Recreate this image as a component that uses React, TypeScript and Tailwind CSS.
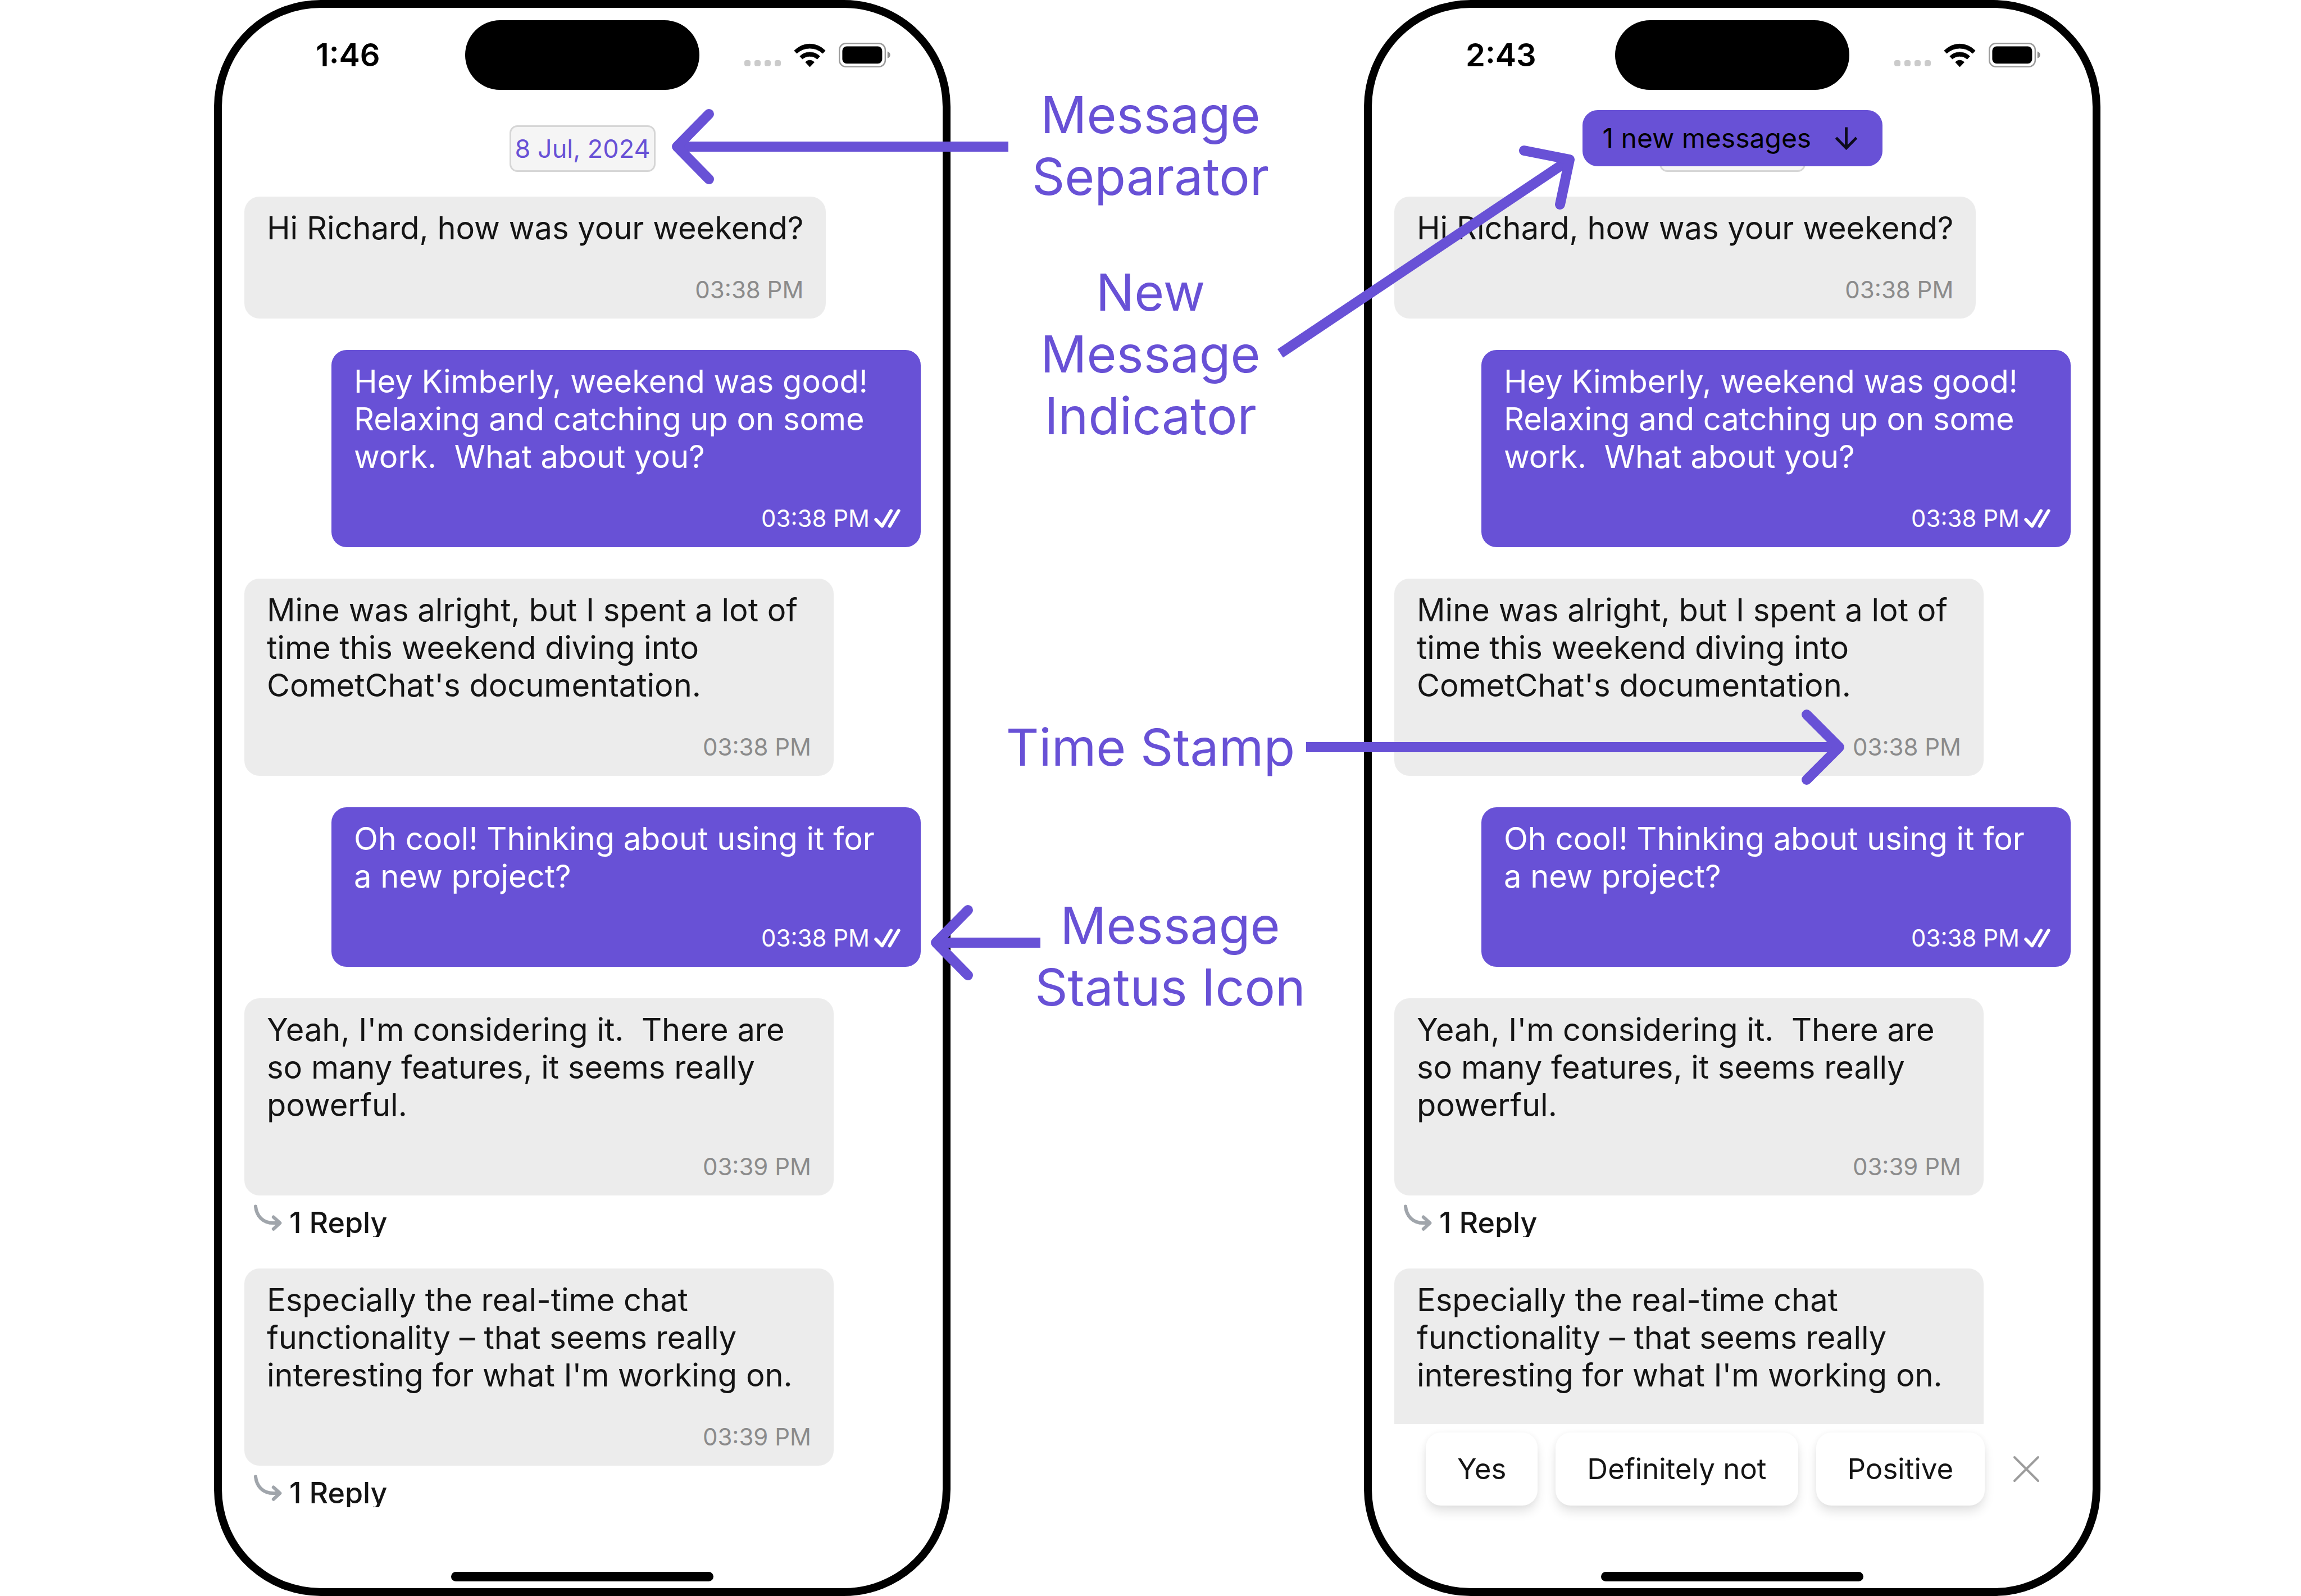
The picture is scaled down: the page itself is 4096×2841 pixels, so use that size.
import { ReactNode } from "react";

type Message = {
  id: number;
  own?: boolean;
  lines: string[];
  time: string;
  replies?: string;
};

const MESSAGES: Message[] = [
  { id: 1, lines: ["Hi Richard, how was your weekend?"], time: "03:38 PM" },
  {
    id: 2,
    own: true,
    lines: ["Hey Kimberly, weekend was good!", "Relaxing and catching up on some", "work.  What about you?"],
    time: "03:38 PM",
  },
  {
    id: 3,
    lines: ["Mine was alright, but I spent a lot of", "time this weekend diving into", "CometChat's documentation."],
    time: "03:38 PM",
  },
  { id: 4, own: true, lines: ["Oh cool! Thinking about using it for", "a new project?"], time: "03:38 PM" },
  {
    id: 5,
    lines: ["Yeah, I'm considering it.  There are", "so many features, it seems really", "powerful."],
    time: "03:39 PM",
    replies: "1 Reply",
  },
  {
    id: 6,
    lines: ["Especially the real-time chat", "functionality – that seems really", "interesting for what I'm working on."],
    time: "03:39 PM",
    replies: "1 Reply",
  },
];

function WifiIcon() {
  return (
    <svg viewBox="29 36 188 141" className="h-[43px] w-[57px]" stroke="black" strokeWidth="3" strokeLinejoin="round" aria-hidden="true">
      <path d="M32 79Q72 40 123 40T214 79L199 95Q166 65 123 65T47 95z" />
      <path d="M65 112Q90 88 123 88T182 112L167 128Q148 112 123 112T80 128z" />
      <path d="M98 147Q109 135 123 135T149 147L123 174z" />
    </svg>
  );
}

function BatteryIcon() {
  return (
    <svg viewBox="297 36 302 144" className="h-[44px] w-[92px]" aria-hidden="true">
      <rect x="301" y="40" width="268" height="136" rx="38" fill="none" stroke="#9b9b9b" strokeWidth="8" />
      <rect x="318" y="57" width="233" height="101" rx="26" />
      <path d="M582 87Q598 93 598 107T582 127z" fill="#8f8f8f" />
    </svg>
  );
}

function DoubleCheckIcon() {
  return (
    <svg viewBox="54 71 156 113" className="h-[34px] w-[47px]" fill="none" stroke="white" strokeWidth="20" strokeLinecap="round" strokeLinejoin="round" aria-hidden="true">
      <path d="M65 134L101 172L154 82M146 172L199 82" />
    </svg>
  );
}

function ReplyIcon() {
  return (
    <svg viewBox="47 42 168 155" className="h-[47px] w-[51px]" fill="none" stroke="#a0a5ab" strokeWidth="20" strokeLinecap="round" strokeLinejoin="round" aria-hidden="true">
      <path d="M60 54C66 112 104 151 165 151H202M165 116L203 151L165 186" />
    </svg>
  );
}

function StatusBar({ time }: { time: string }) {
  return (
    <header className="mt-[22px] grid grid-cols-[1fr_auto_1fr] items-center">
      <p className="pl-[167px] text-[56px] leading-[66px] font-semibold">{time}</p>
      <div className="h-[124px] w-[417px] rounded-full bg-black" />
      <div className="flex items-end justify-end gap-[23px] pr-[93px]">
        <div className="flex gap-[7px] pb-[2px]">
          {[0, 1, 2, 3].map((n) => (
            <span key={n} className="size-[11px] rounded-[4px] bg-[#cbcbcb]" />
          ))}
        </div>
        <WifiIcon />
        <BatteryIcon />
      </div>
    </header>
  );
}

function Bubble({ message }: { message: Message }) {
  const { own, lines, time, replies } = message;
  return (
    <li className={own ? "mb-[56px] flex flex-col items-end" : "mb-[56px] flex flex-col items-start"}>
      <div
        className={
          own
            ? "w-[1049px] rounded-[27px] bg-[#6851d6] pt-[23px] pr-[36px] pb-[28px] pl-[40px] text-white"
            : lines.length === 1
              ? "rounded-[27px] bg-[#ececec] pt-[23px] pr-[40px] pb-[28px] pl-[40px] text-[#141414]"
              : "w-[1049px] rounded-[27px] bg-[#ececec] pt-[23px] pr-[40px] pb-[28px] pl-[40px] text-[#141414]"
        }
      >
        <p className="text-[56px] leading-[67px] whitespace-pre">{lines.join("\n")}</p>
        <div className="mt-[52px] flex items-center justify-end gap-[8px]">
          <time className={own ? "text-[42px] leading-[47px]" : "text-[42px] leading-[47px] text-[#8b8b8b]"}>{time}</time>
          {own && <DoubleCheckIcon />}
        </div>
      </div>
      {replies && (
        <button type="button" className="flex h-[74px] gap-[13px] overflow-hidden pl-[16px] text-[#141414]">
          <span className="pt-[16px]">
            <ReplyIcon />
          </span>
          <span className="pt-[25px] text-[52px] leading-[48px] font-medium">{replies}</span>
        </button>
      )}
    </li>
  );
}

function Phone({ time, banner, children }: { time: string; banner?: ReactNode; children?: ReactNode }) {
  return (
    <section className="relative flex h-screen flex-col overflow-hidden rounded-[190px] border-[14px] border-black bg-white">
      <StatusBar time={time} />
      {banner}
      <div className="min-h-0 flex-1 overflow-hidden pt-[63px] pr-[39px] pl-[40px]">
        <p className="mx-auto mb-[44px] h-[83px] w-[260px] rounded-[14px] border-[3px] border-[#d6d6d6] bg-[#f5f5f5] text-center text-[45px] leading-[77px] whitespace-nowrap text-[#6851d6]">
          8 Jul, 2024
        </p>
        <ul>
          {MESSAGES.map((m) => (
            <Bubble key={m.id} message={m} />
          ))}
        </ul>
      </div>
      {children}
      <div className="mx-auto mb-[12px] h-[17px] w-[467px] shrink-0 rounded-full bg-black" />
    </section>
  );
}

function NewMessages() {
  return (
    <button
      type="button"
      className="absolute top-[182px] left-1/2 flex h-[100px] w-[534px] -translate-x-1/2 items-center justify-between rounded-[27px] bg-[#6851d6] pr-[44px] pl-[36px] text-[48px] whitespace-nowrap text-black"
    >
      1 new messages
      <svg viewBox="50 52 134 136" className="size-[41px]" fill="none" stroke="#0d0a1c" strokeWidth="16" aria-hidden="true">
        <path d="M117 54V178M57 116L117 177L177 116" />
      </svg>
    </button>
  );
}

function SmartReplies() {
  return (
    <div className="flex shrink-0 items-center gap-[32px] pt-[15px] pb-[118px] pl-[96px]">
      {["Yes", "Definitely not", "Positive"].map((text) => (
        <button
          key={text}
          type="button"
          className="h-[130px] rounded-[27px] bg-white px-[56px] text-[51px] whitespace-nowrap text-[#141414] shadow-[0_12px_20px_-2px_rgba(0,0,0,0.12),0_0_12px_rgba(0,0,0,0.04)]"
        >
          {text}
        </button>
      ))}
      <button type="button" aria-label="Close" className="ml-[18px]">
        <svg viewBox="0 0 48 48" className="size-[48px]" fill="none" stroke="#9c9c9c" strokeWidth="4" strokeLinecap="round" aria-hidden="true">
          <path d="M3 3l42 42M45 3L3 45" />
        </svg>
      </button>
    </div>
  );
}

function Arrows() {
  return (
    <svg
      viewBox="0 0 4096 2841"
      className="pointer-events-none absolute inset-0 h-full w-full"
      fill="none"
      stroke="#6851d6"
      strokeWidth="18"
      strokeLinejoin="round"
      aria-hidden="true"
    >
      <path d="M1795 261H1208M2279 629L2790 287M2325 1330H3270M1852 1678H1670" />
      <g strokeLinecap="round">
        <path d="M1262 203L1205 261L1262 319" />
        <path d="M2713 268L2794 284L2777 364" />
        <path d="M3216 1272L3274 1330L3216 1388" />
        <path d="M1723 1620L1666 1678L1723 1736" />
      </g>
    </svg>
  );
}

export default function App() {
  return (
    <main
      className="relative grid h-screen grid-cols-[381fr_1311fr_736fr_1311fr_357fr] overflow-hidden bg-white text-black"
      style={{ fontFamily: 'Inter, "Liberation Sans", sans-serif' }}
    >
      <div className="col-start-2">
        <Phone time="1:46" />
      </div>
      <div className="flex flex-col pt-[149px] pr-[24px] text-center text-[91px] leading-[110px] whitespace-pre text-[#6851d6]">
        <p>{"Message\nSeparator"}</p>
        <p className="mt-[96px]">{"New\nMessage\nIndicator"}</p>
        <p className="mt-[480px]">Time Stamp</p>
        <p className="mt-[207px] pl-[70px]">{"Message\nStatus Icon"}</p>
      </div>
      <Phone time="2:43" banner={<NewMessages />}>
        <SmartReplies />
      </Phone>
      <Arrows />
    </main>
  );
}
